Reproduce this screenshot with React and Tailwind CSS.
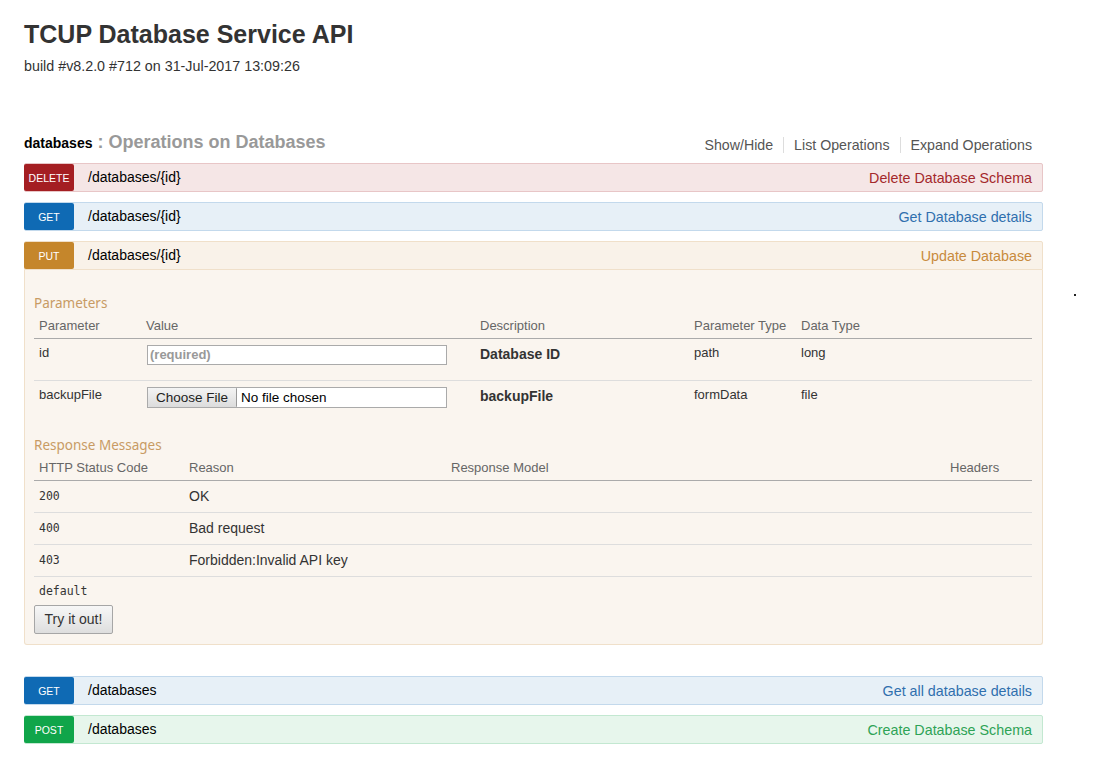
const ops = {
  delete: { badge: 'bg-[#a41e22]', row: 'bg-[#f5e6e6] border-[#e8c6c7]', summary: 'text-[#a4282b]' },
  get: { badge: 'bg-[#0f6ab4]', row: 'bg-[#e7f0f7] border-[#c3d9ec]', summary: 'text-[#2f6fae]' },
  put: { badge: 'bg-[#c5862b]', row: 'bg-[#f9f2e9] border-[#f0e0ca]', summary: 'text-[#c88a3c]' },
  post: { badge: 'bg-[#10a54a]', row: 'bg-[#e7f6ec] border-[#c3e8d1]', summary: 'text-[#2ea356]' },
}

function OpRow({ method, path, summary, open }) {
  const s = ops[method]
  return (
    <div
      className={`flex h-[29px] items-stretch border ${s.row} ${open ? 'rounded-t-[2px]' : 'rounded-[2px]'}`}
    >
      <span
        className={`-ml-px flex w-[50px] shrink-0 items-center justify-center rounded-[2px] pt-[2px] text-[10.5px] uppercase text-white ${s.badge}`}
      >
        {method}
      </span>
      <span className="ml-[14px] flex items-center text-[14px] text-black">{path}</span>
      <span className={`ml-auto flex items-center pr-[10px] pt-[2px] text-[14.3px] ${s.summary}`}>{summary}</span>
    </div>
  )
}

const h4 = "text-[13.5px] leading-[16px] text-[#c89b64] font-['Noto_Sans','Open_Sans',sans-serif]"
const paramCols = 'grid grid-cols-[107px_334px_214px_107px_1fr]'
const respCols = 'grid grid-cols-[150px_262px_499px_1fr]'
const mono = "font-['DejaVu_Sans_Mono','Liberation_Mono',monospace] text-[11.5px]"

function PutContent() {
  return (
    <div className="rounded-b-[3px] border border-t-0 border-[#f0e0ca] bg-[#faf5ef] pb-[10px] pl-[9px] pr-[10px] pt-[25px]">
      <h4 className={h4}>Parameters</h4>
      <div className={`${paramCols} mt-[5px] h-[23px] border-b border-[#aaa] pt-[2px] text-[13px] leading-[16px] text-[#666]`}>
        <span className="pl-[5px]">Parameter</span>
        <span className="pl-[5px]">Value</span>
        <span className="pl-[5px]">Description</span>
        <span className="pl-[5px]">Parameter Type</span>
        <span className="pl-[5px]">Data Type</span>
      </div>
      <div className={`${paramCols} h-[42px] border-b border-[#ddd] pt-[6px] text-[13px] leading-[16px] text-[#333]`}>
        <span className="pl-[5px]">id</span>
        <span className="pl-[6px]">
          <span className="flex h-[20px] w-[300px] items-center border border-[#aaa] bg-white px-[2px] text-[13px] font-bold text-[#999]">
            (required)
          </span>
        </span>
        <span className="pl-[5px] pt-[1px] text-[14px] font-bold text-[#333]">Database ID</span>
        <span className="pl-[5px]">path</span>
        <span className="pl-[5px]">long</span>
      </div>
      <div className={`${paramCols} h-[41px] pt-[6px] text-[13px] leading-[16px] text-[#333]`}>
        <span className="pl-[5px]">backupFile</span>
        <span className="pl-[6px]">
          <span className="flex h-[21px] w-[300px] items-center border border-[#aaa] bg-white text-[13.5px] text-black">
            <span className="flex h-[19px] items-center rounded-[1px] border-r border-[#999] bg-gradient-to-b from-[#f4f4f4] to-[#dcdcdc] px-[8px] text-[#222]">
              Choose File
            </span>
            <span className="ml-[4px]">No file chosen</span>
          </span>
        </span>
        <span className="pl-[5px] pt-[1px] text-[14px] font-bold text-[#333]">backupFile</span>
        <span className="pl-[5px]">formData</span>
        <span className="pl-[5px]">file</span>
      </div>
      <h4 className={`${h4} mt-[15px]`}>Response Messages</h4>
      <div className={`${respCols} mt-[5px] h-[23px] border-b border-[#aaa] pt-[2px] text-[13px] leading-[16px] text-[#666]`}>
        <span className="pl-[5px]">HTTP Status Code</span>
        <span className="pl-[5px]">Reason</span>
        <span className="pl-[5px]">Response Model</span>
        <span className="pl-[5px]">Headers</span>
      </div>
      {[
        ['200', 'OK'],
        ['400', 'Bad request'],
        ['403', 'Forbidden:Invalid API key'],
      ].map(([code, reason]) => (
        <div key={code} className={`${respCols} h-[32px] border-b border-[#ddd] pt-[7px] leading-[16px] text-[#333]`}>
          <span className={`pl-[5px] ${mono}`}>{code}</span>
          <span className="pl-[5px] text-[14px]">{reason}</span>
          <span />
          <span />
        </div>
      ))}
      <div className={`${respCols} h-[24px] pt-[6px] leading-[16px] text-[#333]`}>
        <span className={`pl-[5px] ${mono}`}>default</span>
      </div>
      <button
        type="button"
        className="mt-[4px] h-[29px] w-[79px] rounded-[2px] border border-[#a6a6a6] bg-gradient-to-b from-[#f7f7f7] to-[#dedede] text-[14px] text-[#333]"
      >
        Try it out!
      </button>
    </div>
  )
}

export default function App() {
  return (
    <div className="relative min-h-[771px] bg-white font-['Liberation_Sans',Arial,sans-serif] text-[#333]">
      <div className="ml-[24px] w-[1019px]">
        <h1 className="pt-[19px] text-[25px] font-bold leading-[30px] text-[#333]">TCUP Database Service API</h1>
        <p className="mt-[7px] text-[14.3px] leading-[20px] text-[#333]">build #v8.2.0 #712 on 31-Jul-2017 13:09:26</p>

        <div className="mt-[58px] flex h-[22px] items-end">
          <h2 className="flex items-baseline">
            <span className="text-[14px] font-bold text-black">databases</span>
            <span className="ml-[5px] text-[18px] font-bold text-[#999]">: Operations on Databases</span>
          </h2>
          <ul className="mb-[3px] ml-auto flex pr-[11px] text-[14.2px] leading-[16px] text-[#555]">
            <li className="border-r border-[#ddd] px-[10px]">Show/Hide</li>
            <li className="border-r border-[#ddd] px-[10px]">List Operations</li>
            <li className="pl-[10px]">Expand Operations</li>
          </ul>
        </div>

        <div className="mt-[7px] flex flex-col gap-[10px]">
          <OpRow method="delete" path="/databases/{id}" summary="Delete Database Schema" />
          <OpRow method="get" path="/databases/{id}" summary="Get Database details" />
          <div>
            <OpRow method="put" path="/databases/{id}" summary="Update Database" open />
            <PutContent />
          </div>
        </div>

        <div className="mt-[31px] flex flex-col gap-[10px]">
          <OpRow method="get" path="/databases" summary="Get all database details" />
          <OpRow method="post" path="/databases" summary="Create Database Schema" />
        </div>
      </div>
      <span className="absolute left-[1074px] top-[294px] h-[2px] w-[2px] bg-[#222]" />
    </div>
  )
}
